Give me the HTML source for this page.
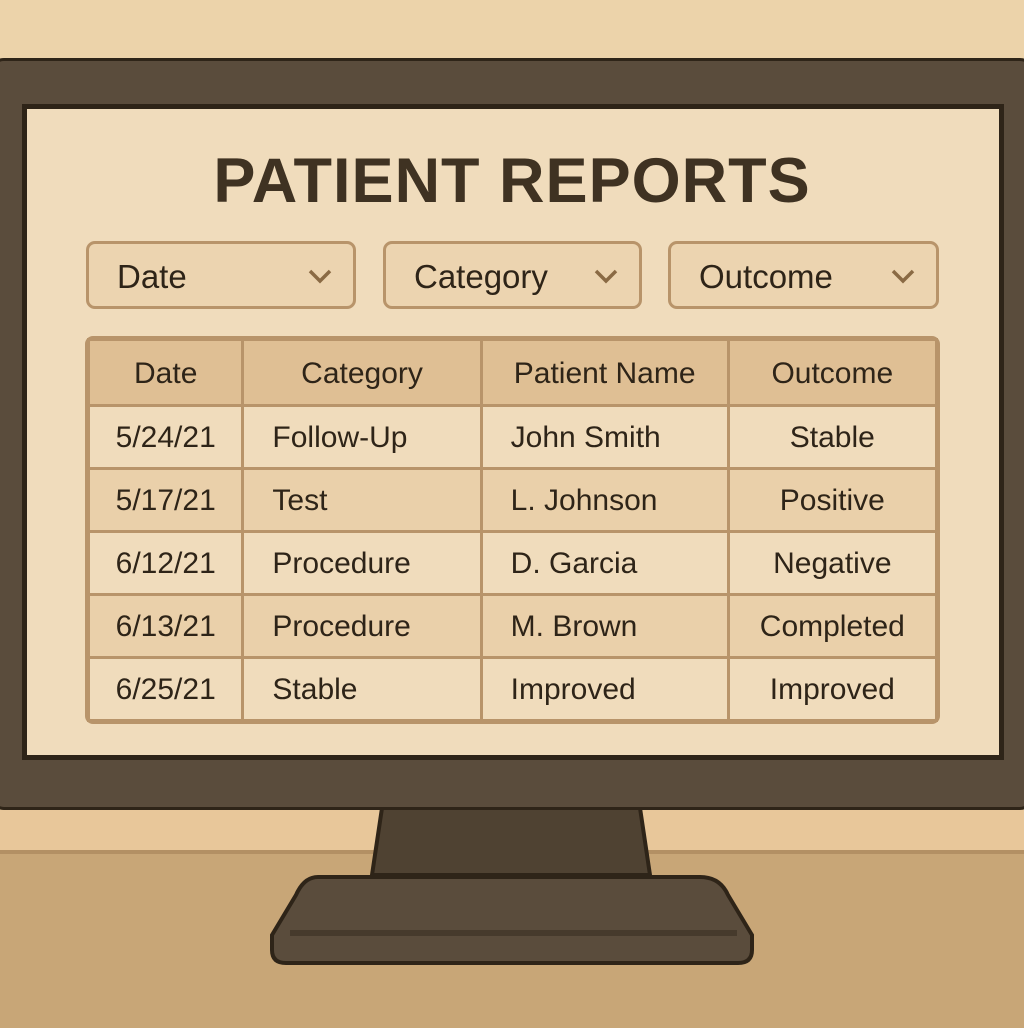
<!DOCTYPE html>
<html><head><style>
body{margin:0;width:1024px;height:1024px;overflow:hidden;background:#ecd3aa;font-family:"Liberation Sans",sans-serif;position:relative}
.abs{position:absolute}
.dd{position:absolute;top:241px;height:62px;border:3px solid #b8946a;border-radius:9px;background:#ecd4b0;box-sizing:content-box}
.dd span{position:absolute;left:28px;top:14px;font-size:33px;color:#2e2418}
.dd svg{position:absolute;right:20px;top:24px}
table{position:absolute;left:87px;top:338px;width:851px;border-collapse:collapse;font-size:30px;color:#2e2418}
td{border:3px solid #b8946a;height:63px;padding:0;padding-top:2px;box-sizing:border-box}
tr.h td{background:#dfbf94;height:66px;text-align:center}
tr:nth-child(even) td{background:#f0dcbc}
tr:nth-child(odd):not(.h) td{background:#ead0aa}
td.c{text-align:center}
td.l{padding-left:28px}
</style></head><body>
<div class="abs" style="left:0;top:850px;width:1024px;height:174px;background:#c8a677;border-top:4px solid #b39064"></div>
<div class="abs" style="left:0;top:810px;width:1024px;height:40px;background:#e8c79a"></div>
<svg class="abs" style="left:0;top:0" width="1024" height="1024">
<path d="M382 808 L640 808 L650 875 L372 875 Z" fill="#4f4232" stroke="#2e2418" stroke-width="4"/>
<path d="M318 877 L700 877 Q720 877 728 895 L752 935 L752 950 Q752 963 738 963 L286 963 Q272 963 272 950 L272 935 L296 895 Q304 877 318 877 Z" fill="#5a4c3c" stroke="#2e2418" stroke-width="4"/>
<rect x="290" y="930" width="447" height="6" fill="#463a2c"/>
</svg>
<div class="abs" style="left:-10px;top:58px;width:1044px;height:752px;background:#5a4c3c;border:3px solid #2e2418;border-radius:14px;box-sizing:border-box"></div>
<div class="abs" style="left:22px;top:104px;width:982px;height:656px;background:#f0dcbc;border:5px solid #2e2418;box-sizing:border-box"></div>
<div class="abs" style="left:0;top:145px;width:1024px;text-align:center;font-size:63px;font-weight:bold;color:#3f3222;letter-spacing:1px">PATIENT REPORTS</div>
<div class="dd" style="left:86px;width:264px"><span>Date</span><svg width="26" height="16"><path d="M3 3 L13 13 L23 3" fill="none" stroke="#8a6a44" stroke-width="3.5"/></svg></div>
<div class="dd" style="left:383px;width:253px"><span>Category</span><svg width="26" height="16"><path d="M3 3 L13 13 L23 3" fill="none" stroke="#8a6a44" stroke-width="3.5"/></svg></div>
<div class="dd" style="left:668px;width:265px"><span>Outcome</span><svg width="26" height="16"><path d="M3 3 L13 13 L23 3" fill="none" stroke="#8a6a44" stroke-width="3.5"/></svg></div>
<table>
<colgroup><col style="width:155px"><col style="width:239px"><col style="width:248px"><col style="width:209px"></colgroup>
<tr class="h"><td>Date</td><td>Category</td><td>Patient Name</td><td>Outcome</td></tr>
<tr><td class="c">5/24/21</td><td class="l">Follow-Up</td><td class="l">John Smith</td><td class="c">Stable</td></tr>
<tr><td class="c">5/17/21</td><td class="l">Test</td><td class="l">L. Johnson</td><td class="c">Positive</td></tr>
<tr><td class="c">6/12/21</td><td class="l">Procedure</td><td class="l">D. Garcia</td><td class="c">Negative</td></tr>
<tr><td class="c">6/13/21</td><td class="l">Procedure</td><td class="l">M. Brown</td><td class="c">Completed</td></tr>
<tr><td class="c">6/25/21</td><td class="l">Stable</td><td class="l">Improved</td><td class="c">Improved</td></tr>
</table>
<div class="abs" style="left:85px;top:336px;width:855px;height:388px;border:4px solid #b8946a;border-radius:8px;box-sizing:border-box"></div>
</body></html>
